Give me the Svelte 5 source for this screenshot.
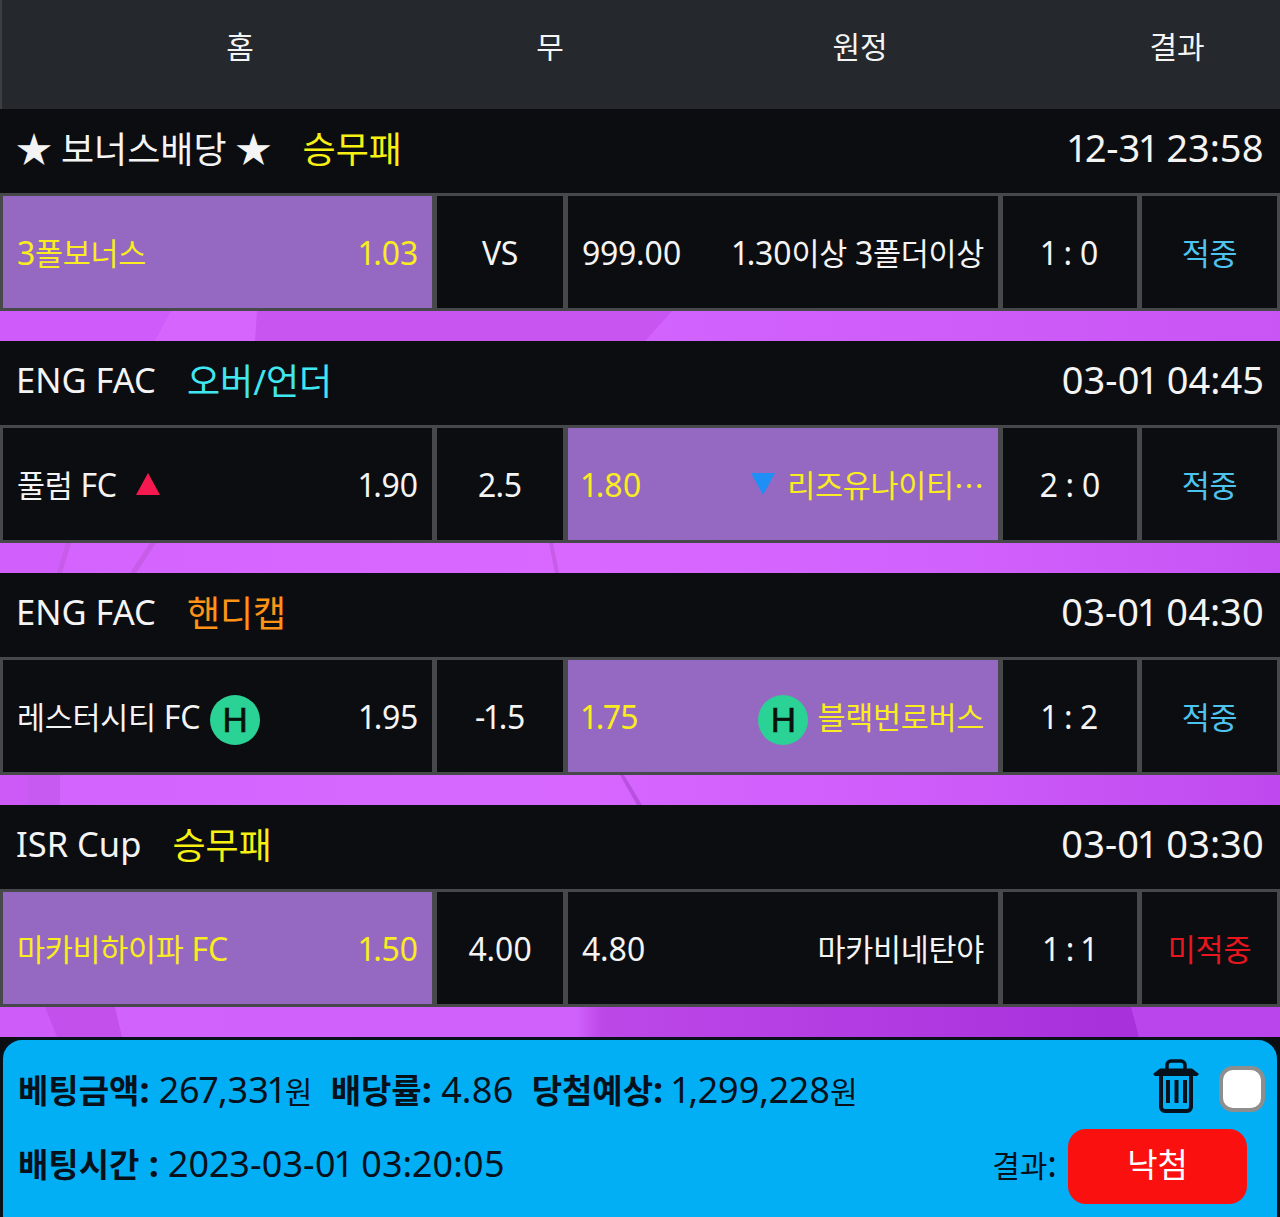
<script>
  const blocks = [
    { league: '★ 보너스배당 ★', type: '승무패', typeColor: 'yellow', time: '12-31 23:58',
      home: '3폴보너스', homeOdd: '1.03', homeOn: true, mid: 'VS', awayOdd: '999.00', away: '1.30이상 3폴더이상', score: '1 : 0', result: '적중', band: 0 },
    { league: 'ENG FAC', type: '오버/언더', typeColor: 'cyan', time: '03-01 04:45',
      home: '풀럼 FC', homeIcon: 'up', homeOdd: '1.90', mid: '2.5', awayOdd: '1.80', awayOn: true, awayIcon: 'down', away: '리즈 유나이티⋯', score: '2 : 0', result: '적중', band: 1 },
    { league: 'ENG FAC', type: '핸디캡', typeColor: 'orange', time: '03-01 04:30',
      home: '레스터 시티 FC', homeIcon: 'h', homeOdd: '1.95', mid: '-1.5', awayOdd: '1.75', awayOn: true, awayIcon: 'h', away: '블랙번 로버스', score: '1 : 2', result: '적중', band: 2 },
    { league: 'ISR Cup', type: '승무패', typeColor: 'yellow', time: '03-01 03:30',
      home: '마카비 하이파 FC', homeOdd: '1.50', homeOn: true, mid: '4.00', awayOdd: '4.80', away: '마카비 네탄야', score: '1 : 1', result: '미적중', miss: true, band: 3 }
  ];

  const bands = [
    { stops: [['0', '#d765ff'], ['0.5', '#d263fd'], ['1', '#c955f4']],
      base: '#c955f1',
      shapes: [
        ['0,0 171,0 155,30 0,30', '#cf5bfa'],
        ['171,0 257,0 255,30 155,30', '#d565fd'],
        ['257,0 672,0 645,30 255,30', '#c955f1']
      ] },
    { stops: [['0', '#d363fd'], ['0.45', '#d868ff'], ['0.75', '#d161fd'], ['1', '#c652f3']],
      shapes: [
        ['0,0 67,0 58,30 0,30', '#d15ffb'],
        ['66,0 71,0 62,30 57,30', '#c65ce8'],
        ['150,0 156,0 136,30 130,30', '#c65ce8'],
        ['549,0 553,0 559,30 555,30', '#c65ce8']
      ] },
    { stops: [['0', '#d263fd'], ['0.42', '#d768ff'], ['0.72', '#ce5cfa'], ['1', '#bf49ee']],
      shapes: [
        ['0,0 28,0 28,30 0,30', '#cd5af7'],
        ['28,0 60,0 60,30 28,30', '#c75af0'],
        ['620,0 624,0 642,30 637,30', '#ba50e0']
      ] },
    { stops: [['0', '#d262fc'], ['0.45', '#d061fb'], ['0.47', '#bd48e8'], ['0.86', '#a931dc'], ['1', '#a931dc']],
      shapes: [
        ['0,0 45,0 57,30 0,30', '#ce5cf9'],
        ['45,0 115,0 122,30 57,30', '#c450ec'],
        ['1131,0 1280,0 1280,30 1139,30', '#bb45ec']
      ] }
  ];

  // Hangul and Latin need different sizes to reproduce the reference's proportions.
  function runs(text) {
    return text.split(/([\u3131-\uD7A3★⋯]+)/).filter(Boolean).map((t) => ({
      t,
      ko: /[\u3131-\uD7A3★⋯]/.test(t)
    }));
  }
</script>

{#snippet txt(text)}{#each runs(text) as r}{#if r.ko}<span class="ko">{r.t}</span>{:else}{r.t}{/if}{/each}{/snippet}

{#snippet icon(kind)}
  {#if kind === 'up'}
    <svg class="tri up" viewBox="0 0 24 22" aria-hidden="true"><path d="M12 0 24 22H0Z" fill="#f5194f"/></svg>
  {:else if kind === 'down'}
    <svg class="tri down" viewBox="0 0 24 22" aria-hidden="true"><path d="M0 0H24L12 22Z" fill="#1e8ff5"/></svg>
  {:else if kind === 'h'}
    <span class="hbadge">H</span>
  {/if}
{/snippet}

<div class="page">
  <header class="head">
    <span>홈</span>
    <span>무</span>
    <span>원정</span>
    <span class="h4">결과</span>
  </header>

  {#each blocks as b}
    <section>
      <div class="title">
        <div class="title-left">
          <span class="league">{@render txt(b.league)}</span>
          <span class={b.typeColor}>{@render txt(b.type)}</span>
        </div>
        <span class="time">{b.time}</span>
      </div>
      <div class="row">
        <div class="cell team" class:on={b.homeOn}>
          <span class="name">{@render txt(b.home)}{#if b.homeIcon}{@render icon(b.homeIcon)}{/if}</span>
          <span>{b.homeOdd}</span>
        </div>
        <div class="cell mid">{b.mid}</div>
        <div class="cell team" class:on={b.awayOn}>
          <span>{b.awayOdd}</span>
          <span class="name">{#if b.awayIcon}{@render icon(b.awayIcon)}{/if}{@render txt(b.away)}</span>
        </div>
        <div class="cell mid">{b.score}</div>
        <div class="cell mid res" class:miss={b.miss}>{@render txt(b.result)}</div>
      </div>
      <svg class="band" viewBox="0 0 1280 30" preserveAspectRatio="none" aria-hidden="true">
        <defs>
          <linearGradient id="band-{b.band}" x1="0" y1="0" x2="1" y2="0">
            {#each bands[b.band].stops as s}
              <stop offset={s[0]} stop-color={s[1]} />
            {/each}
          </linearGradient>
        </defs>
        <rect width="1280" height="30" fill="url(#band-{b.band})" />
        {#each bands[b.band].shapes as sh}
          <polygon points={sh[0]} fill={sh[1]} />
        {/each}
      </svg>
    </section>
  {/each}

  <footer class="panel">
    <div class="line first">
      <div class="sums">
        <b>{@render txt('베팅금액:')}</b> <span>{@render txt('267,331원')}</span>
        <b class="sp">{@render txt('배당률:')}</b> <span>4.86</span>
        <b class="sp">{@render txt('당첨예상:')}</b> <span>{@render txt('1,299,228원')}</span>
      </div>
      <div class="tools">
        <svg class="trash" viewBox="0 0 46 54" aria-hidden="true">
          <path d="M14 10V6a4 4 0 0 1 4-4h10a4 4 0 0 1 4 4v4" fill="none" stroke="#07111c" stroke-width="3.500"/>
          <path d="M0 15 7 9.500h32L46 15l-2 2H2z" fill="#07111c"/>
          <path d="M8 16v32a4 4 0 0 0 4 4h22a4 4 0 0 0 4-4V16" fill="none" stroke="#07111c" stroke-width="4"/>
          <path d="M15 21v23M23.500 21v23M32 21v23" stroke="#07111c" stroke-width="4" fill="none"/>
        </svg>
        <span class="check"></span>
      </div>
    </div>
    <div class="line second">
      <div class="when"><b>{@render txt('배팅시간')} :</b> <span>2023-03-01 03:20:05</span></div>
      <div class="outcome">
        <span class="label">{@render txt('결과:')}</span>
        <span class="lose">낙첨</span>
      </div>
    </div>
  </footer>
</div>

<style>
  :global(body) {
    margin: 0;
    background: #0c0d10;
  }

  .page {
    width: 1280px;
    height: 1217px;
    overflow: hidden;
    color: #f4f4f4;
    background: #0c0d10;
    font-family: "Noto Sans", "Noto Sans CJK KR", sans-serif;
    font-variant-numeric: proportional-nums;
    font-weight: 400;
  }

  .ko {
    font-family: "Noto Sans CJK KR", sans-serif;
  }

  .head {
    height: 109px;
    box-sizing: border-box;
    padding: 0 0 20px 85px;
    background: #25282d;
    box-shadow: inset 2px 0 0 #3c3e42;
    display: grid;
    grid-template-columns: repeat(4, 310px);
    align-items: center;
    font-size: 30px;
    text-align: center;
  }

  .h4 {
    padding-left: 14px;
  }

  .title {
    height: 84px;
    box-sizing: border-box;
    padding: 0 16px 8px;
    display: flex;
    justify-content: space-between;
    align-items: center;
    font-size: 34.500px;
  }

  .title .ko {
    font-size: 36px;
  }

  .title-left {
    display: flex;
    align-items: center;
    gap: 31px;
  }

  .time {
    font-size: 38px;
    margin-right: 0;
  }

  .yellow { color: #f7f013; }
  .cyan { color: #41e7f0; }
  .orange { color: #ff9316; }

  .row {
    height: 118px;
    box-sizing: border-box;
    padding: 3px;
    background: #47484a;
    display: grid;
    grid-template-columns: 429px 126px 430px 134px 1fr;
    gap: 5px;
    font-size: 32px;
    letter-spacing: -0.3px;
  }

  .row .ko {
    font-size: 30.500px;
  }

  .cell {
    background: #0c0d10;
    display: flex;
    align-items: center;
    min-width: 0;
    white-space: nowrap;
  }

  .team {
    justify-content: space-between;
    padding: 0 14px;
  }

  .on {
    background: #9568c1;
    color: #f9ec20;
  }

  .name {
    display: inline-flex;
    align-items: center;
    white-space: pre;
  }

  .mid {
    justify-content: center;
  }

  .res {
    color: #4ec3ee;
  }

  .res.miss {
    color: #e8161e;
  }

  .tri {
    width: 24px;
    height: 22px;
  }

  .tri.up {
    margin-left: 19px;
    margin-right: 10px;
  }

  .tri.down {
    margin-right: 12px;
  }

  .hbadge {
    width: 50px;
    height: 50px;
    margin: 8px 9px 0 10px;
    border-radius: 50%;
    background: #2bd296;
    color: #06110c;
    font-family: "Liberation Sans", sans-serif;
    font-size: 35px;
    line-height: 50px;
    text-align: center;
    letter-spacing: 0;
    -webkit-text-stroke: 0.6px #06110c;
  }

  .band {
    display: block;
    width: 1280px;
    height: 30px;
  }

  .panel {
    box-sizing: border-box;
    height: 200px;
    padding: 0 30px 0 15px;
    border: 3px solid #08101a;
    border-radius: 22px;
    background: #02aff5;
    color: #07111c;
    font-size: 36px;
  }

  .panel .ko {
    font-size: 30px;
  }

  .panel b {
    font-weight: 700;
  }

  .panel b .ko {
    font-size: 33px;
    font-weight: 700;
  }

  .line {
    display: flex;
    justify-content: space-between;
    align-items: center;
  }

  .first {
    height: 80px;
    padding-top: 9px;
  }

  .second {
    height: 75px;
  }

  .sums {
    white-space: pre-wrap;
  }

  .sums .sp {
    margin-left: 9px;
  }

  .when {
    margin-bottom: 7px;
  }

  .tools {
    display: flex;
    align-items: center;
    gap: 20px;
    margin-right: -18px;
  }

  .trash {
    width: 46px;
    height: 54px;
    margin-bottom: 6px;
  }

  .check {
    box-sizing: border-box;
    width: 46px;
    height: 46px;
    background: #fff;
    border: 4px solid #8e8e8e;
    border-radius: 14px;
  }

  .outcome {
    display: flex;
    align-items: center;
    gap: 11px;
  }

  .label {
    margin-bottom: 7px;
  }

  .lose {
    width: 179px;
    height: 75px;
    display: flex;
    align-items: center;
    justify-content: center;
    background: #fb1010;
    color: #fff;
    border-radius: 18px;
    font-family: "Noto Sans CJK KR", sans-serif;
    font-size: 33px;
    padding-bottom: 8px;
    box-sizing: border-box;
  }
</style>
